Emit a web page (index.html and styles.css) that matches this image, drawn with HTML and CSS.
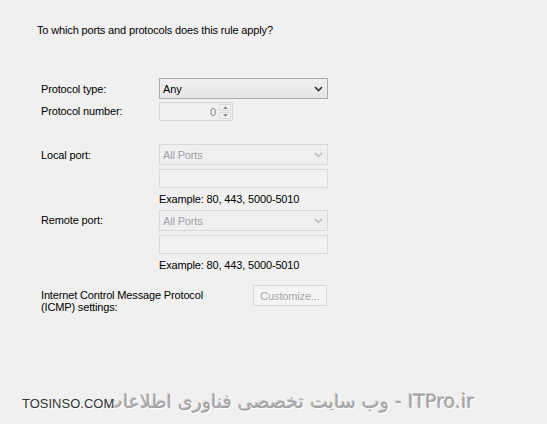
FILE: index.html
```html
<!DOCTYPE html>
<html>
<head>
<meta charset="utf-8">
<link rel="stylesheet" href="styles.css">
</head>
<body>
<div class="page">
  <div class="title">To which ports and protocols does this rule apply?</div>
  <div class="form">
    <div class="label l-type">Protocol type:</div>
    <div class="select enabled r-type"><span>Any</span>
      <svg class="chev" width="9" height="6" viewBox="0 0 9 6"><path d="M1 1 L4.5 4.5 L8 1" fill="none" stroke="#333" stroke-width="1.6"/></svg>
    </div>
    <div class="label l-num">Protocol number:</div>
    <div class="spin r-num">
      <span class="val">0</span>
      <div class="spinbtns">
        <div class="sb"><svg width="5" height="3" viewBox="0 0 5 3"><path d="M0 3 L2.5 0 L5 3Z" fill="#8a8a8a"/></svg></div>
        <div class="sb"><svg width="5" height="3" viewBox="0 0 5 3"><path d="M0 0 L2.5 3 L5 0Z" fill="#8a8a8a"/></svg></div>
      </div>
    </div>

    <div class="label l-local">Local port:</div>
    <div class="group r-local">
      <div class="select disabled"><span>All Ports</span>
        <svg class="chev" width="9" height="6" viewBox="0 0 9 6"><path d="M1 1 L4.5 4.5 L8 1" fill="none" stroke="#b9b9b9" stroke-width="1.4"/></svg>
      </div>
      <div class="textbox"></div>
      <div class="example">Example: 80, 443, 5000-5010</div>
    </div>

    <div class="label l-remote">Remote port:</div>
    <div class="group r-remote">
      <div class="select disabled"><span>All Ports</span>
        <svg class="chev" width="9" height="6" viewBox="0 0 9 6"><path d="M1 1 L4.5 4.5 L8 1" fill="none" stroke="#b9b9b9" stroke-width="1.4"/></svg>
      </div>
      <div class="textbox"></div>
      <div class="example">Example: 80, 443, 5000-5010</div>
    </div>

    <div class="icmp">
      <div class="icmp-label">Internet Control Message Protocol<br>(ICMP) settings:</div>
      <div class="button">Customize...</div>
    </div>
  </div>
  <div class="watermark">
    <span class="wm-fa" dir="rtl">ITPro.ir - وب سایت تخصصی فناوری اطلاعات</span>
    <span class="wm-en">TOSINSO.COM</span>
  </div>
</div>
</body>
</html>
```

FILE: styles.css
```css
html, body {
  margin: 0;
  padding: 0;
  background: #f0f0f0;
}
body {
  width: 547px;
  height: 424px;
  overflow: hidden;
  font-family: "Liberation Sans", Arial, sans-serif;
  font-size: 11px;
  letter-spacing: -0.15px;
  color: #000;
}
.page {
  padding: 23px 0 0 37px;
  position: relative;
  height: 401px;
  box-sizing: border-box;
}
.title {
  height: 14px;
  line-height: 14px;
}
.form {
  margin: 41px 0 0 4px;
  display: grid;
  grid-template-columns: 118px 169px;
  align-items: start;
}
.label {
  line-height: 14px;
}
.l-type { margin-top: 4px; }
.l-num { margin-top: 5px; }
.l-local { margin-top: 27px; }
.l-remote { margin-top: 7px; }

.select {
  box-sizing: border-box;
  height: 21px;
  display: flex;
  align-items: center;
  justify-content: space-between;
  padding: 0 4px 0 3px;
}
.select.enabled {
  border: 1px solid #acacac;
  background: linear-gradient(#f0f0f0, #e5e5e5);
}
.select.disabled {
  border: 1px solid #d9d9d9;
  background: #efefef;
  color: #a3a3a3;
}
.chev { display: block; }
.r-num { margin-top: 3px; }
.spin {
  box-sizing: border-box;
  width: 74px;
  height: 19px;
  border: 1px solid #d9d9d9;
  background: #f0f0f0;
  display: flex;
  align-items: center;
  justify-content: flex-end;
  color: #8a8a8a;
}
.spin .val { margin-right: 3px; }
.spinbtns {
  display: flex;
  flex-direction: column;
  gap: 1px;
  margin-right: 1px;
}
.sb {
  width: 12px;
  height: 7px;
  border: 1px solid #d9d9d9;
  box-sizing: border-box;
  display: flex;
  align-items: center;
  justify-content: center;
  background: #f4f4f4;
}
.r-local { margin-top: 23px; }
.r-remote { margin-top: 4px; }
.group {
  display: flex;
  flex-direction: column;
}
.textbox {
  box-sizing: border-box;
  margin-top: 4px;
  height: 19px;
  border: 1px solid #dadada;
  background: #f2f2f2;
}
.example {
  margin-top: 4px;
  line-height: 14px;
}
.icmp {
  grid-column: 1 / 3;
  margin-top: 13px;
  display: flex;
  justify-content: space-between;
  align-items: flex-start;
}
.icmp-label {
  line-height: 12px;
  margin-top: 4px;
}
.button {
  box-sizing: border-box;
  width: 74px;
  height: 21px;
  border: 1px solid #d9d9d9;
  background: #f4f4f4;
  color: #a6a6a6;
  display: flex;
  align-items: center;
  justify-content: center;
  margin-right: 1px;
}
.watermark {
  position: absolute;
  left: 22px;
  top: 390px;
  width: 452px;
  height: 26px;
}
.wm-fa {
  position: absolute;
  right: 0;
  top: 0;
  font-family: "DejaVu Sans", "Noto Sans", sans-serif;
  font-size: 19px;
  letter-spacing: 0;
  color: #a4a4a4;
  text-shadow: 1px 1px 0 #fff, -1px -1px 0 #c4c4c4;
  white-space: nowrap;
}
.wm-en {
  position: absolute;
  left: 0;
  top: 6px;
  font-family: "Liberation Sans", Arial, sans-serif;
  font-size: 13px;
  color: #333;
  text-shadow: 1px 1px 0 #fff;
  letter-spacing: 0;
}
```
